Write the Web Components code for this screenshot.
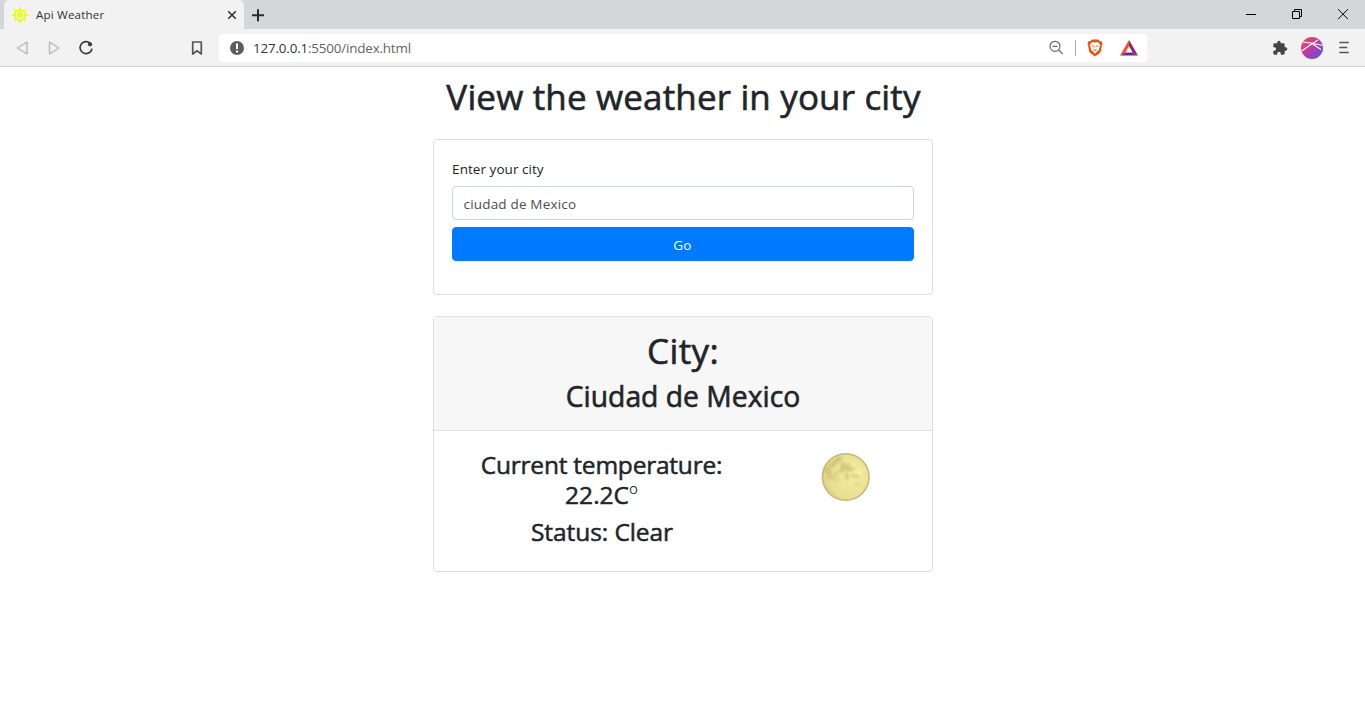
<!DOCTYPE html>
<html lang="en">
<head>
<meta charset="utf-8">
<title>Api Weather</title>
<style>
html,body{margin:0;height:100%;background:#fff;overflow:hidden}
body{font-family:"Open Sans","Noto Sans",sans-serif;color:#212529}
</style>
</head>
<body>
<weather-window></weather-window>
<script>
const define = (name, css, html) => customElements.define(name, class extends HTMLElement {
  constructor() {
    super();
    this.attachShadow({ mode: 'open' }).innerHTML = `<style>*{box-sizing:border-box}svg{display:block;flex:none}${css}</style>${html}`;
  }
});

define('tab-strip', `
:host{display:flex;height:29px;background:#d3d7da;padding-left:4px;align-items:center}
.tab{width:240px;height:29px;background:#f2f2f2;border-radius:5px 5px 0 0;display:flex;align-items:center;padding:1px 7px 0 8px;font-size:11.6px;color:#333}
.tab span{margin-left:8px;letter-spacing:.17px;flex:1;white-space:nowrap;padding-bottom:2px}
.plus{margin-left:7px}
.controls{margin-left:auto;display:flex}
.controls svg{width:46px;height:29px}
`, `
<div class="tab">
<svg width="16" height="16" viewBox="0 0 16 16" fill="none" stroke="#e9ff1f"><circle cx="8" cy="8" r="5" stroke-width="1.7"/><circle cx="8" cy="8" r="3" fill="#e9ff1f" stroke="none"/><g stroke-width="2.1"><path d="M8 0v3M8 13v3M0 8h3M13 8h3M2.300 2.300l2.100 2.100M11.600 11.600l2.100 2.100M2.300 13.700l2.100-2.100M11.600 4.400l2.100-2.100"/></g></svg>
<span>Api Weather</span>
<svg width="10" height="10" viewBox="0 0 10 10" stroke="#333" stroke-width="1.6"><path d="M1.200 1.200l7.600 7.600M8.800 1.200L1.200 8.800"/></svg>
</div>
<svg class="plus" width="14" height="14" viewBox="0 0 14 14" stroke="#2b2b2b" stroke-width="2"><path d="M7 1.200v12M1 7.300h12"/></svg>
<div class="controls">
<svg viewBox="0 0 46 29" stroke="#000"><path d="M19 14.500h10"/></svg>
<svg viewBox="0 0 46 29" stroke="#000" fill="none"><path d="M19.500 11.500h7v7h-7zM21.500 11.500v-2h7v7h-2"/></svg>
<svg viewBox="0 0 46 29" stroke="#000" fill="none"><path d="M19 9.200l10 10M29 9.200l-10 10"/></svg>
</div>`);

define('address-bar', `
:host{display:flex;width:928px;height:28px;background:#fff;border-radius:4px;align-items:center;padding:0 9px 0 11px}
.url{margin-left:9px;font-size:13.4px;letter-spacing:-.17px;color:#5f6368;white-space:nowrap;flex:1}
b{font-weight:400;color:#333}
i{width:1px;height:16px;background:#aaa;margin:0 11px 0 11px}
.tri{margin-left:17px}
`, `
<svg width="14" height="14" viewBox="0 0 14 14"><circle cx="7" cy="7" r="7" fill="#5b5e61"/><path d="M7 2.600v5.400M7 9.400v2" stroke="#fff" stroke-width="2"/></svg>
<div class="url"><b>127.0.0.1</b>:5500/index.html</div>
<svg width="15" height="15" viewBox="0 0 15 15" fill="none" stroke="#6a6a6a" stroke-width="1.200"><circle cx="6" cy="6.300" r="5"/><path d="M3.500 6.300h5M9.700 10l4 4"/></svg>
<i></i>
<svg width="16" height="18" viewBox="0 0 17 19"><path d="M5 .5h7l1.500 1.700 1.800-.1 1.200 3-.7 1.600-1 6.300-1.500 2.200-4.800 3.300-4.800-3.300-1.500-2.200-1-6.300-.7-1.600 1.200-3 1.800.1z" fill="#f4500d"/><path d="M5.500 3.100l3 .6 3-.6 2.500 3-1.300 4.100.1 1.500-1.700.9-2.600 2.900-2.600-2.900-1.700-.9.100-1.500L3 6.100z" fill="#fff"/><path d="M5 6.700l2.300.7-.2.900zM12 6.700l-2.300.7.2.900zM8.500 6.500v3.500M6.700 10.800l1.800.8 1.800-.8-1.100 1.400h-1.400z" fill="#f4500d" stroke="#f4500d" stroke-width=".35"/></svg>
<svg class="tri" width="18" height="16" viewBox="0 0 18 16"><path d="M9 0L0 15.500l5.400-3.100L9 6z" fill="#ff4b28"/><path d="M9 0l9 15.500-5.400-3.100L9 6z" fill="#9b1f72"/><path d="M0 15.500h18l-5.400-3.100H5.400z" fill="#662d91"/></svg>`);

define('browser-toolbar', `
:host{display:flex;height:38px;background:#f2f2f2;border-bottom:1px solid #d0d2d4;align-items:center;padding:0 13px 0 15px}
.fwd{margin-left:18px}.reload{margin-left:17px}.mark{margin:0 16px 0 97px}
.ext{margin-left:auto}.avatar{margin-left:13px}.menu{margin-left:13px}
`, `
<svg width="14" height="16" viewBox="0 0 14 16" fill="none" stroke="#b9b9b9" stroke-width="1.4" stroke-linejoin="round"><path d="M12 2.200v11.600L2.300 8z"/></svg>
<svg class="fwd" width="14" height="16" viewBox="0 0 14 16" fill="none" stroke="#b9b9b9" stroke-width="1.400" stroke-linejoin="round"><path d="M2.500 2.200v11.600L12 8z"/></svg>
<svg class="reload" width="16" height="16" viewBox="0 0 16 16"><path d="M12.300 3.400A6 6 0 1 0 14 8.600" fill="none" stroke="#3b3b3b" stroke-width="1.700"/><circle cx="12" cy="4.300" r="2.100" fill="#3b3b3b"/></svg>
<svg class="mark" width="12" height="16" viewBox="0 0 12 16" fill="none" stroke="#555" stroke-width="1.700" stroke-linejoin="round"><path d="M1.700 2h8.600v12L6 10.800 1.700 14z"/></svg>
<address-bar></address-bar>
<svg class="ext" width="16" height="16" viewBox="0 0 24 24" fill="#444"><path d="M20.500 11H19V7c0-1.100-.9-2-2-2h-4V3.500a2.500 2.500 0 0 0-5 0V5H4c-1.100 0-2 .9-2 2v3.800h1.500a2.700 2.700 0 0 1 0 5.400H2V20c0 1.100.9 2 2 2h3.800v-1.500a2.700 2.700 0 0 1 5.400 0V22H17c1.100 0 2-.9 2-2v-4h1.500a2.500 2.500 0 0 0 0-5z"/></svg>
<svg class="avatar" width="22" height="22" viewBox="0 0 22 22"><defs><linearGradient id="a" x1="0" y1="0" x2="1" y2="1"><stop offset=".1" stop-color="#f04a5c"/><stop offset=".5" stop-color="#bd37aa"/><stop offset="1" stop-color="#3f5fe0"/></linearGradient><clipPath id="c"><circle cx="11" cy="11" r="11"/></clipPath></defs><g clip-path="url(#c)"><path fill="url(#a)" d="M0 0h22v22H0z"/><path d="M0 14.500Q8 8.500 17 3M2 5Q11 6 22 8.500M10 6L20 12.500" fill="none" stroke="#fff" stroke-width="1.200"/></g></svg>
<svg class="menu" width="16" height="14" viewBox="0 0 16 14" stroke="#555" stroke-width="1.700"><path d="M3.300 1.500h9.500M3.300 6.500h8M3.300 11.500h9.500"/></svg>`);

define('weather-card', `
:host{display:block;width:500px;background:#fff;border:1px solid #dfdfdf;border-radius:4px;overflow:hidden}
`, `<slot name="header"></slot><slot></slot>`);

define('city-form', `
:host{display:block;padding:18px 18px 33px;font-size:13.5px}
label{display:block;height:22px;line-height:22px;letter-spacing:.05px;padding-left:.6px;color:#212529}
input,button{display:block;width:100%;height:34px;border-radius:4px;font:inherit;margin:0}
input{margin-top:6px;border:1px solid #ced4da;padding:1px 11px 0;color:#495057;background:#fff;letter-spacing:.18px;outline:0}
button{margin-top:7px;background:#007bff;border:1px solid #007bff;color:#fff;padding:2px 0 0;letter-spacing:.2px}
`, `<label for="city">Enter your city</label><input id="city" value="ciudad de Mexico"><button>Go</button>`);

define('city-heading', `
:host{display:block;height:114px;padding:12px 0 0 1px;text-align:center;background:#f7f7f7;border-bottom:1px solid #dfdfdf}
h1,h2{margin:0;font-weight:500;white-space:nowrap;-webkit-text-stroke:.6px #212529}
h1{font-size:35px;line-height:43px;letter-spacing:.4px}
h2{font-size:28.300px;line-height:35px;margin-top:7px}
`, `<h1>City:</h1><h2><slot></slot></h2>`);

define('moon-icon', `:host{display:block;width:50px;height:50px}`, `
<svg width="50" height="50" viewBox="0 0 50 50"><defs><radialGradient id="g" cx=".65" cy=".45" r=".65"><stop offset="0" stop-color="#f6ec9f"/><stop offset=".8" stop-color="#e9df91"/><stop offset="1" stop-color="#dcd080"/></radialGradient><filter id="b"><feGaussianBlur stdDeviation=".9"/></filter><clipPath id="m"><circle cx="25" cy="25" r="23"/></clipPath></defs>
<circle cx="24.700" cy="25" r="23.300" fill="url(#g)" stroke="#c4ba7b" stroke-width="1.600"/>
<g clip-path="url(#m)" filter="url(#b)" fill="#b9ae68"><path opacity=".55" d="M10 11q7-8 12-6l-2 4-4 2-2 4-5 0-4 5-3-1z"/><path opacity=".5" d="M19 12l4-3 1 4 4-2 1 4 5 1-2 3-5 1-3-2-2 3-5-2 3-3zM24 21l3 0 1 5-2 3-2-4z"/><path opacity=".4" d="M5 18l5-2 2 4-2 3 5 1-3 4-6-1zM14 19l4 1-1 3-4 1zM30 21l5 2 4 0-2 4-5-2-2 1z"/><path opacity=".25" d="M12 26l5-1 3 3-5 2zM33 32l5-2 1 3-5 2z"/></g>
<circle cx="38.500" cy="20.500" r="2" fill="#fff8bd" opacity=".8" filter="url(#b)"/></svg>`);

define('weather-report', `
:host{display:flex;height:140px;padding:19px 18px}
.data{width:300px;text-align:center}
.icon{flex:1;display:flex;justify-content:center;padding:2px 0 0 27px}
h3{margin:0 0 7px;font-size:24.500px;line-height:30px;font-weight:500;white-space:nowrap;-webkit-text-stroke:.5px #212529}
.t{letter-spacing:-.22px}
.s{letter-spacing:-.08px;padding-left:1px}
.deg{-webkit-text-stroke:0;font-weight:300}
`, `<div class="data"><h3><span class="t">Current temperature:</span><br>22.2C<span class="deg">º</span></h3><h3 class="s">Status: Clear</h3></div><div class="icon"><moon-icon></moon-icon></div>`);

define('weather-page', `
:host{display:flex;flex-direction:column;align-items:center}
h1{margin:8px 0 21px;padding-left:2px;font-size:35px;line-height:43px;font-weight:500;white-space:nowrap;letter-spacing:.15px;-webkit-text-stroke:.6px #212529}
.form{height:156px;margin-bottom:21px}
.report{height:256px}
`, `<h1>View the weather in your city</h1>
<weather-card class="form"><city-form></city-form></weather-card>
<weather-card class="report"><city-heading slot="header">Ciudad de Mexico</city-heading><weather-report></weather-report></weather-card>`);

define('weather-window', `:host{display:block;width:1365px;height:726px;overflow:hidden}`, `<tab-strip></tab-strip><browser-toolbar></browser-toolbar><weather-page></weather-page>`);
</script>
</body>
</html>
